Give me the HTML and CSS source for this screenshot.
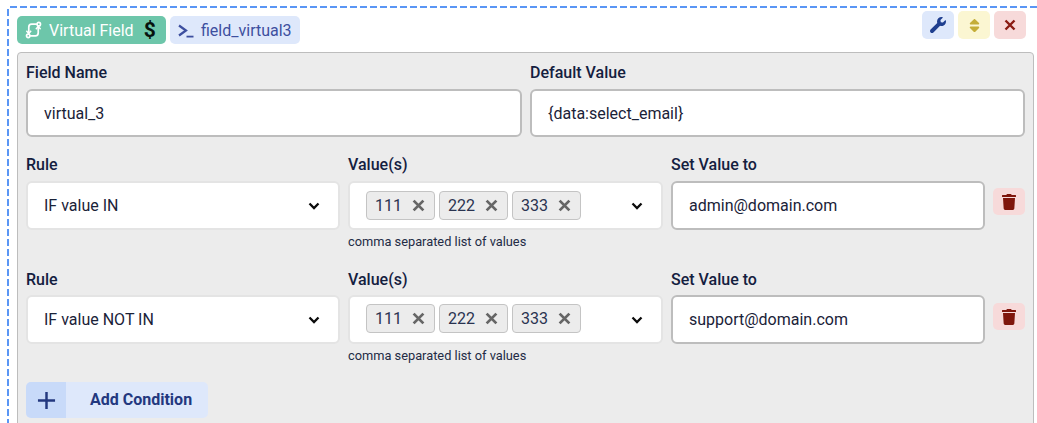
FILE: index.html
```html
<!DOCTYPE html>
<html lang="en">
<head>
<meta charset="utf-8">
<title>Virtual Field</title>
<link rel="stylesheet" href="styles.css">
</head>
<body>
<div class="wrap">
  <div class="top">
    <div class="tags">
      <span class="tag tag-green">
        <svg class="i-route" viewBox="0 0 18 18" fill="none" stroke="#fff" stroke-width="1.800"><circle cx="14.600" cy="2.800" r="1.800"/><circle cx="3.400" cy="15.200" r="1.800"/><path d="M12.600 2.800H7C5 2.800 4 4 4 6v6.600"/><path d="M14 5.400V12c0 2-1 3.200-3 3.200H5.400"/><path d="M1.500 9.800 4 12.800 6.500 9.800M16.500 8.200 14 5.200 11.500 8.200" stroke-width="1.500"/></svg>
        <span class="tag-text">Virtual Field</span>
        <span class="dollar">$</span>
      </span>
      <span class="tag tag-blue">
        <svg class="i-term" viewBox="0 0 16 14" fill="none" stroke="#3d4f9f" stroke-width="2.200"><path d="M1 1.500 8 6.500 1 11.500"/><path d="M8.500 12.600H15.500" stroke-width="1.800"/></svg>
        <span>field_virtual3</span>
      </span>
    </div>
    <div class="actions">
      <button class="act act-blue"><svg class="i-wrench" viewBox="0 0 512 512"><path d="M507.730 109.100c-2.240-9.030-13.540-12.090-20.120-5.510l-74.360 74.360-67.880-11.310-11.310-67.880 74.360-74.360c6.620-6.620 3.430-17.900-5.660-20.160-47.380-11.740-99.550.91-136.580 37.930-39.640 39.640-50.550 97.100-34.050 147.200L18.740 402.760c-24.990 24.990-24.990 65.510 0 90.500 24.990 24.990 65.510 24.990 90.500 0l213.210-213.210c50.120 16.710 107.470 5.680 147.370-34.220 37.070-37.070 49.700-89.320 37.910-136.730z"/></svg></button>
      <button class="act act-yellow"><svg class="i-sort" viewBox="0 0 320 512"><path d="M41 288h238c21.400 0 32.100 25.900 17 41L177 448c-9.400 9.400-24.600 9.400-33.900 0L24 329c-15.100-15.100-4.400-41 17-41zm255-105L177 64c-9.400-9.400-24.600-9.400-33.900 0L24 183c-15.100 15.100-4.400 41 17 41h238c21.400 0 32.100-25.900 17-41z"/></svg></button>
      <button class="act act-red"><svg class="i-x" viewBox="0 0 12 12"><path d="M1.500 1.500 10.500 10.500M10.500 1.500 1.500 10.500"/></svg></button>
    </div>
  </div>

  <div class="panel">
    <div class="row-two">
      <div class="field">
        <div class="label">Field Name</div>
        <div class="input">virtual_3</div>
      </div>
      <div class="field">
        <div class="label">Default Value</div>
        <div class="input input-default">{data:select_email}</div>
      </div>
    </div>

    <div class="cond">
      <div class="field">
        <div class="label">Rule</div>
        <div class="select"><span>IF value IN</span><svg class="chev" viewBox="0 0 12 8"><path d="M1.500 1.500 6 6 10.500 1.500"/></svg></div>
      </div>
      <div class="field">
        <div class="label">Value(s)</div>
        <div class="select select-multi">
          <div class="chips">
            <span class="chip">111<svg class="chip-x" viewBox="0 0 12 12"><path d="M1.500 1.500 10.500 10.500M10.500 1.500 1.500 10.500"/></svg></span>
            <span class="chip">222<svg class="chip-x" viewBox="0 0 12 12"><path d="M1.500 1.500 10.500 10.500M10.500 1.500 1.500 10.500"/></svg></span>
            <span class="chip">333<svg class="chip-x" viewBox="0 0 12 12"><path d="M1.500 1.500 10.500 10.500M10.500 1.500 1.500 10.500"/></svg></span>
          </div>
          <svg class="chev" viewBox="0 0 12 8"><path d="M1.500 1.500 6 6 10.500 1.500"/></svg>
        </div>
        <div class="help">comma separated list of values</div>
      </div>
      <div class="field">
        <div class="label">Set Value to</div>
        <div class="input input-set">admin@domain.com</div>
      </div>
      <button class="trash"><svg class="i-trash" viewBox="0 0 448 512"><path d="M432 32H312l-9.400-18.700A24 24 0 0 0 281.100 0H166.800a23.720 23.720 0 0 0-21.400 13.300L136 32H16A16 16 0 0 0 0 48v32a16 16 0 0 0 16 16h416a16 16 0 0 0 16-16V48a16 16 0 0 0-16-16zM53.200 467a48 48 0 0 0 47.900 45h245.800a48 48 0 0 0 47.900-45L416 128H32z"/></svg></button>
    </div>

    <div class="cond cond-second">
      <div class="field">
        <div class="label">Rule</div>
        <div class="select"><span>IF value NOT IN</span><svg class="chev" viewBox="0 0 12 8"><path d="M1.500 1.500 6 6 10.500 1.500"/></svg></div>
      </div>
      <div class="field">
        <div class="label">Value(s)</div>
        <div class="select select-multi">
          <div class="chips">
            <span class="chip">111<svg class="chip-x" viewBox="0 0 12 12"><path d="M1.500 1.500 10.500 10.500M10.500 1.500 1.500 10.500"/></svg></span>
            <span class="chip">222<svg class="chip-x" viewBox="0 0 12 12"><path d="M1.500 1.500 10.500 10.500M10.500 1.500 1.500 10.500"/></svg></span>
            <span class="chip">333<svg class="chip-x" viewBox="0 0 12 12"><path d="M1.500 1.500 10.500 10.500M10.500 1.500 1.500 10.500"/></svg></span>
          </div>
          <svg class="chev" viewBox="0 0 12 8"><path d="M1.500 1.500 6 6 10.500 1.500"/></svg>
        </div>
        <div class="help">comma separated list of values</div>
      </div>
      <div class="field">
        <div class="label">Set Value to</div>
        <div class="input input-set">support@domain.com</div>
      </div>
      <button class="trash"><svg class="i-trash" viewBox="0 0 448 512"><path d="M432 32H312l-9.400-18.700A24 24 0 0 0 281.100 0H166.800a23.720 23.720 0 0 0-21.400 13.300L136 32H16A16 16 0 0 0 0 48v32a16 16 0 0 0 16 16h416a16 16 0 0 0 16-16V48a16 16 0 0 0-16-16zM53.200 467a48 48 0 0 0 47.900 45h245.800a48 48 0 0 0 47.900-45L416 128H32z"/></svg></button>
    </div>

    <button class="add">
      <span class="add-icon"><svg class="i-plus" viewBox="0 0 20 20"><path d="M10 1V19M1 10H19"/></svg></span>
      <span class="add-text">Add Condition</span>
    </button>
  </div>
</div>
</body>
</html>
```
FILE: styles.css
```css
* { box-sizing: border-box; }
html, body { margin: 0; padding: 0; height: 423px; overflow: hidden; background: #fff; }
body { font-family: Roboto, "Liberation Sans", sans-serif; color: #14203f; font-size: 16px; }
button { border: 0; padding: 0; font: inherit; cursor: pointer; display: flex; align-items: center; justify-content: center; }

.wrap {
  width: 1037px;
  height: 417px;
  margin: 6px 0 0 7px;
  padding: 5px 8px 0 10px;
  overflow: hidden;
  background-image:
    repeating-linear-gradient(90deg, #5a96f5 0 7px, transparent 7px 10px),
    repeating-linear-gradient(180deg, #5a96f5 0 7px, transparent 7px 10px);
  background-size: 100% 2px, 2px 100%;
  background-position: 3px 0, 0 3px;
  background-repeat: no-repeat;
}

.top { display: flex; justify-content: space-between; height: 41px; margin-right: 10px; }
.tags { display: flex; gap: 4px; padding-top: 5px; height: 33px; }
.tag { display: flex; align-items: center; height: 28px; border-radius: 5px; font-size: 16px; }
.tag-green { width: 149px; background: #6dc6aa; color: #fff; padding-left: 8px; }
.tag-text { margin-left: 7px; }
.dollar { margin-left: 10px; font-size: 21px; font-weight: 700; color: #06120e; }
.tag-blue { width: 130px; background: #dee8fb; color: #3d4f9f; padding-left: 8px; }
.i-route { width: 17px; height: 18px; }
.i-term { width: 16px; height: 14px; margin-right: 7px; margin-top: 2px; }

.actions { display: flex; gap: 4px; }
.act { width: 32px; height: 28px; border-radius: 5px; }
.act-blue { background: #dee8fb; }
.act-yellow { background: #fbf6d2; }
.act-red { background: #f7dada; }
.i-wrench { width: 16px; height: 16px; fill: #1f3f8f; }
.i-sort { width: 11px; height: 17px; fill: #c4ad37; }
.i-x { width: 12px; height: 12px; fill: none; stroke: #8a1c14; stroke-width: 2.400; }

.panel {
  width: 1017px;
  height: 460px;
  background: #ececec;
  border: 1px solid #bdbdbd;
  border-radius: 4px;
  padding: 8px;
}

.row-two { display: grid; grid-template-columns: 496px 495px; gap: 8px; }
.field { display: flex; flex-direction: column; }
.label { font-size: 16px; font-weight: 500; line-height: 20px; height: 28px; padding-top: 2px; color: #14203f; }

.input {
  height: 48px;
  background: #fff;
  border: 2px solid #bdbdbd;
  border-radius: 6px;
  display: flex;
  align-items: center;
  padding-left: 16px;
  color: #1a2238;
}

.cond {
  display: grid;
  grid-template-columns: 314px 315px 314px 32px;
  column-gap: 8px;
  margin-top: 16px;
  height: 100px;
}
.cond-second { margin-top: 15px; height: 99px; }
.cond-second .label { height: 27px; }
.cond-second .chips { margin-bottom: 2px; }
.input-set { height: 49px; }

.select {
  height: 49px;
  background: #fff;
  border: 2px solid #e4e4e4;
  border-radius: 6px;
  display: flex;
  align-items: center;
  justify-content: space-between;
  padding: 0 18px 0 16px;
  color: #1a2238;
}
.chev { width: 12px; height: 8px; fill: none; stroke: #0b0b0b; stroke-width: 2.300; }

.chips { display: flex; gap: 4px; }
.chip {
  display: flex;
  align-items: center;
  width: 69px;
  height: 29px;
  background: #ececec;
  border: 1px solid #c4c4c4;
  border-radius: 4px;
  padding-left: 8px;
  color: #2a3350;
}
.chip-x { width: 13px; height: 13px; margin-left: 10px; fill: none; stroke: #666; stroke-width: 2.600; }

.help { font-size: 12.800px; line-height: 16px; margin-top: 4px; color: #232b45; }

.trash {
  width: 32px;
  height: 27px;
  margin-top: 35px;
  background: #f7dada;
  border-radius: 5px;
}
.i-trash { width: 14px; height: 16px; fill: #7f160c; }

.add {
  display: flex;
  width: 182px;
  height: 36px;
  background: #dee8fb;
  border-radius: 5px;
  overflow: hidden;
  margin-top: 15px;
  color: #23387f;
  font-weight: 700;
  justify-content: flex-start;
}
.add-icon { width: 40px; height: 36px; background: #c8daf9; display: flex; align-items: center; justify-content: center; }
.i-plus { width: 19px; height: 19px; fill: none; stroke: #23387f; stroke-width: 2.600; }
.add-text { margin: 0 0 2px 24px; }
```
